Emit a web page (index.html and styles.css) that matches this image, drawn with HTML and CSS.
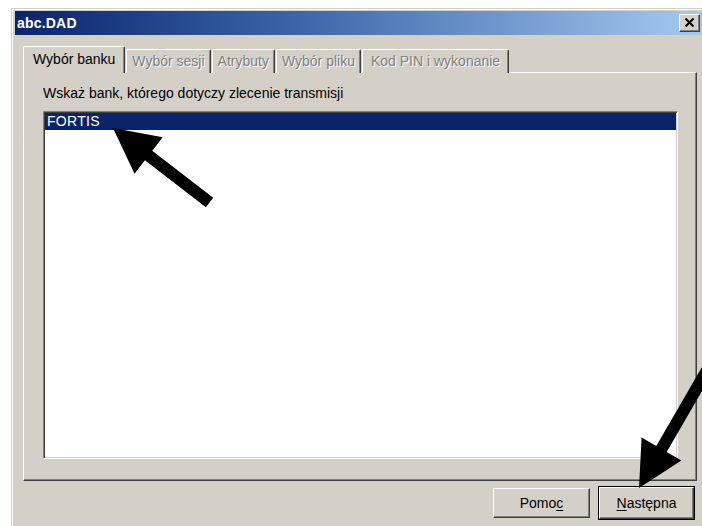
FILE: index.html
```html
<!DOCTYPE html>
<html lang="pl">
<head>
<meta charset="utf-8">
<title>abc.DAD</title>
<link rel="stylesheet" href="styles.css">
</head>
<body>
<div class="window">
  <div class="titlebar">
    <span class="title">abc.DAD</span>
    <button class="close" type="button" aria-label="Zamknij">
      <svg width="9" height="9" viewBox="0 0 9 9"><path d="M0.5 0.5 L8.5 8.5 M8.5 0.5 L0.5 8.5" stroke="#000" stroke-width="2" fill="none"/></svg>
    </button>
  </div>
  <div class="client">
    <div class="tabs">
      <div class="tab tab-active">Wybór banku</div>
      <div class="tab tab-disabled">Wybór sesji</div>
      <div class="tab tab-disabled">Atrybuty</div>
      <div class="tab tab-disabled">Wybór pliku</div>
      <div class="tab tab-disabled tab-wide">Kod PIN i wykonanie</div>
    </div>
    <div class="panel">
      <div class="prompt">Wskaż bank, którego dotyczy zlecenie transmisji</div>
      <div class="listbox">
        <div class="item item-selected">FORTIS</div>
      </div>
    </div>
    <div class="buttons">
      <button class="btn" type="button">Pomo<u>c</u></button>
      <button class="btn btn-default" type="button"><u>N</u>astępna</button>
    </div>
  </div>
</div>

<!-- hint arrows drawn over the dialog -->
<svg class="hints" width="702" height="526" viewBox="0 0 702 526">
  <polygon transform="translate(113 128) rotate(37.7)" points="0,0 45,-23 45,-6 122,-6 122,6 45,6 45,23" fill="#000"/>
  <polygon transform="translate(639 488) rotate(-60)" points="0,0 45,-23 45,-6 200,-6 200,6 45,6 45,23" fill="#000"/>
</svg>
</body>
</html>
```

FILE: styles.css
```css
html, body {
  margin: 0;
  padding: 0;
  background: #fff;
  overflow: hidden;
  width: 702px;
  height: 526px;
}

body {
  position: relative;
  font-family: "Liberation Sans", Arial, sans-serif;
  font-size: 14px;
  color: #000;
}

.window {
  box-sizing: border-box;
  width: 698px;
  height: 540px;
  margin: 8px 0 0 11px;
  padding: 2px 3px 0 3px;
  background: #d4d0c8;
  border: 1px solid #d4d0c8;
  box-shadow: inset 1px 1px 0 #fff;
}

.titlebar {
  height: 24px;
  display: flex;
  align-items: center;
  justify-content: space-between;
  padding: 0 5px 0 2px;
  background: linear-gradient(to right, #0a246a 0%, #3a64a8 40%, #a6caf0 100%);
}

.title {
  color: #fff;
  font-weight: bold;
  font-size: 14px;
  line-height: 24px;
  letter-spacing: 0.2px;
}

.close {
  box-sizing: border-box;
  width: 21px;
  height: 18px;
  margin: 0;
  padding: 0;
  display: flex;
  align-items: center;
  justify-content: center;
  background: #d4d0c8;
  border: 1px solid;
  border-color: #fff #404040 #404040 #fff;
  box-shadow: inset -1px -1px 0 #808080;
}

.close svg {
  display: block;
  margin: 0 0 1px 0;
}

.client {
  padding: 11px 8px 0 8px;
}

.tabs {
  display: flex;
  align-items: flex-end;
  gap: 1px;
  height: 27px;
  position: relative;
  z-index: 1;
}

.tab {
  box-sizing: border-box;
  height: 24px;
  padding: 0 5px;
  line-height: 22px;
  white-space: nowrap;
  border-top: 1px solid #fff;
  border-left: 1px solid #fff;
  border-right: 1px solid #404040;
  box-shadow: inset -1px 0 0 #808080;
  border-radius: 2px 2px 0 0;
  background: #d4d0c8;
}

.tab-active {
  height: 27px;
  padding: 0 9px 1px 9px;
  line-height: 24px;
}

.tab-wide {
  padding: 0 8px;
}

.tab-disabled {
  color: #808080;
  text-shadow: 1px 1px 0 #fff;
}

.panel {
  box-sizing: border-box;
  height: 409px;
  margin-top: -1px;
  padding: 12px 18px 0 19px;
  border: 1px solid;
  border-color: #fff #404040 #404040 #fff;
  box-shadow: inset -1px -1px 0 #808080;
}

.prompt {
  line-height: 16px;
  margin-bottom: 10px;
}

.listbox {
  box-sizing: border-box;
  height: 348px;
  background: #fff;
  border: 1px solid;
  border-color: #808080 #fff #fff #808080;
  box-shadow: inset 1px 1px 0 #404040, inset -1px -1px 0 #d4d0c8;
  padding: 1px;
}

.item {
  height: 17px;
  line-height: 17px;
  padding-left: 2px;
  letter-spacing: 0.3px;
}

.item-selected {
  background: #0a246a;
  color: #fff;
}

.buttons {
  display: flex;
  justify-content: flex-end;
  gap: 9px;
  margin-top: 7px;
  padding-right: 3px;
}

.btn {
  box-sizing: border-box;
  width: 97px;
  height: 30px;
  margin: 0;
  padding: 0;
  font-family: inherit;
  font-size: 14px;
  color: #000;
  background: #d4d0c8;
  border: 1px solid;
  border-color: #fff #404040 #404040 #fff;
  box-shadow: inset -1px -1px 0 #808080;
}

.btn u {
  text-underline-offset: 2px;
}

.btn-default {
  width: 95px;
  height: 32px;
  margin-top: -1px;
  outline: 1px solid #000;
  outline-offset: 0;
}

.hints {
  position: absolute;
  left: 0;
  top: 0;
  pointer-events: none;
}
```
